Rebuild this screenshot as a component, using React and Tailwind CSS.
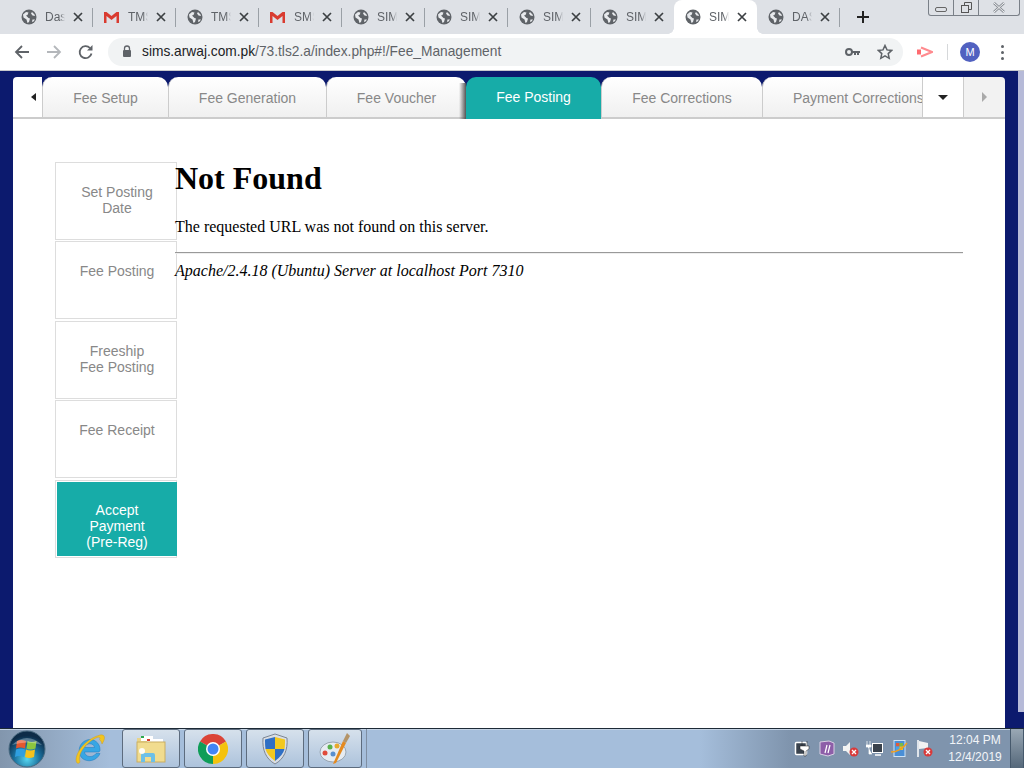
import React from "react";

const chromeTabs = [
  { title: "Das", icon: "globe" },
  { title: "TMS", icon: "gmail" },
  { title: "TMS", icon: "globe" },
  { title: "SMS", icon: "gmail" },
  { title: "SIM", icon: "globe" },
  { title: "SIM", icon: "globe" },
  { title: "SIM", icon: "globe" },
  { title: "SIM", icon: "globe" },
  { title: "SIM", icon: "globe", active: true },
  { title: "DAS", icon: "globe" },
];

const feeTabs = [
  { label: "Fee Setup", width: "w-[126px]" },
  { label: "Fee Generation", width: "w-[158px]" },
  { label: "Fee Voucher", width: "w-[140px]" },
  { label: "Fee Posting", width: "w-[135px]", active: true },
  { label: "Fee Corrections", width: "w-[161px]" },
];

const sideItems = [
  { lines: ["Set Posting", "Date"], gap: "mb-px" },
  { lines: ["Fee Posting"], gap: "mb-[2px]" },
  { lines: ["Freeship", "Fee Posting"], gap: "mb-px" },
  { lines: ["Fee Receipt"], gap: "mb-[2px]" },
];

const Globe = () => (
  <svg width="16" height="16" viewBox="0 0 16 16" className="shrink-0">
    <circle cx="8" cy="8" r="7.500" fill="#5f6368" />
    <path d="M2 5.500L5 3l2.500.500L6.500 6 5 6.500 7.500 9l1.500.500-1 3.500-1.500 1-1-3.500L2.500 8.500z" fill="#e8eaed" />
    <path d="M11 3l2.500 2.500.500 1.500-2.500-.500-1.500-2z" fill="#e8eaed" />
    <path d="M11.500 10.500H14l-1.500 2-1.500.500z" fill="#e8eaed" />
  </svg>
);

const Gmail = () => (
  <svg width="15" height="12" viewBox="0 0 15 12" className="mr-px shrink-0">
    <path d="M2.500 5V1l5 4 5-4v4l-5 4z" fill="#e4e4e4" opacity="0.700" />
    <path d="M0 1h2.500L7.500 5l5-4H15v11h-2.500V5L7.500 9 2.500 5v7H0z" fill="#d93b30" />
  </svg>
);

const CloseX = () => (
  <svg width="10" height="10" viewBox="0 0 10 10" className="shrink-0">
    <path d="M1 1l8 8M9 1l-8 8" stroke="#3c4043" strokeWidth="1.700" />
  </svg>
);

const ChromeTab = ({ tab, showSep }) => (
  <div
    className={`relative flex h-[34px] w-[83px] shrink-0 items-center pl-[11px] ${
      tab.active ? "rounded-t-[8px] bg-white" : ""
    }`}
  >
    {tab.active && (
      <>
        <span className="absolute bottom-0 left-[-6px] h-[6px] w-[6px] bg-[radial-gradient(circle_at_top_left,transparent_5.500px,#ffffff_6px)]" />
        <span className="absolute bottom-0 right-[-6px] h-[6px] w-[6px] bg-[radial-gradient(circle_at_top_right,transparent_5.500px,#ffffff_6px)]" />
      </>
    )}
    {tab.icon === "globe" ? <Globe /> : <Gmail />}
    <span className="ml-[8px] w-[20px] overflow-hidden whitespace-nowrap text-[12px] text-[#5f6368] [mask-image:linear-gradient(to_right,black_75%,transparent)]">
      {tab.title}
    </span>
    <span className="ml-[8px]">
      <CloseX />
    </span>
    {showSep && <span className="absolute right-0 top-[8px] h-[19px] w-px bg-[#9aa0a6]" />}
  </div>
);

const WindowControls = () => (
  <div className="absolute right-[4px] top-0 flex h-[16px] w-[92px] rounded-b-[3px] border border-t-0 border-[#7a8088]">
    <div className="flex w-[25px] items-center justify-center border-r border-[#7a8088]">
      <span className="mt-[3px] h-[5px] w-[12px] rounded-[2px] border border-[#666]" />
    </div>
    <div className="flex w-[25px] items-center justify-center border-r border-[#7a8088]">
      <svg width="13" height="13" viewBox="0 0 13 13">
        <rect x="1.500" y="4.500" width="7" height="7" fill="none" stroke="#555" />
        <path d="M4.500 4V1.500h7v7H9" fill="none" stroke="#555" />
      </svg>
    </div>
    <div className="flex flex-1 items-center justify-center">
      <svg width="12" height="11" viewBox="0 0 12 11">
        <path d="M1 1l10 9M11 1L1 10" stroke="#8a8f96" strokeWidth="2.500" />
        <path d="M1 1l10 9M11 1L1 10" stroke="#f4f5f6" strokeWidth="1" />
      </svg>
    </div>
  </div>
);

const Toolbar = () => (
  <div className="flex h-[37px] items-center border-b border-[#c8c9cc] bg-white">
    <svg width="16" height="16" viewBox="0 0 16 16" className="ml-[14px]">
      <path d="M15 8H2M8 2L2 8l6 6" fill="none" stroke="#5f6368" strokeWidth="1.800" />
    </svg>
    <svg width="16" height="16" viewBox="0 0 16 16" className="ml-[16px]">
      <path d="M1 8h13M8 2l6 6-6 6" fill="none" stroke="#b4b7bb" strokeWidth="1.800" />
    </svg>
    <svg width="16" height="16" viewBox="0 0 16 16" className="ml-[16px]">
      <path d="M13.500 9.500A6 6 0 1 1 12 4" fill="none" stroke="#5f6368" strokeWidth="1.800" />
      <path d="M14.500 1v5.500H9z" fill="#5f6368" />
    </svg>
    <div className="ml-[14px] flex h-[28px] w-[795px] items-center rounded-full bg-[#f1f3f4] pl-[14px]">
      <svg width="10" height="12" viewBox="0 0 10 12" className="mb-[2px]">
        <path d="M2.500 5V3.500a2.500 2.500 0 0 1 5 0V5" fill="none" stroke="#5f6368" strokeWidth="1.300" />
        <rect x="1" y="5" width="8" height="7" rx="1" fill="#5f6368" />
      </svg>
      <span className="ml-[10px] whitespace-nowrap text-[13.750px] text-[#5f6368]">
        <span className="text-[#202124]">sims.arwaj.com.pk</span>/73.tls2.a/index.php#!/Fee_Management
      </span>
      <svg width="16" height="10" viewBox="0 0 16 10" className="ml-auto">
        <circle cx="4" cy="5" r="3" fill="none" stroke="#5f6368" strokeWidth="2" />
        <path d="M7 4h8v2h-1v2h-2V6h-1v2H9V6H7z" fill="#5f6368" />
      </svg>
      <svg width="16" height="16" viewBox="0 0 16 16" className="ml-[16px] mr-[10px]">
        <path
          d="M8 1.500l2 4.400 4.700.500-3.500 3.200 1 4.700L8 11.900l-4.200 2.400 1-4.700L1.300 6.400 6 5.900z"
          fill="none"
          stroke="#5f6368"
          strokeWidth="1.500"
        />
      </svg>
    </div>
    <svg width="16" height="12" viewBox="0 0 16 12" className="ml-[14px]">
      <rect x="0" y="3.500" width="4" height="5" fill="#ff6b70" />
      <path d="M4 1.500L15 6 4 10.500" fill="none" stroke="#ff8a8e" strokeWidth="2" />
    </svg>
    <span className="ml-[14px] h-[16px] w-px bg-[#d6d8da]" />
    <span className="ml-[12px] flex h-[20px] w-[20px] items-center justify-center rounded-full bg-[#5161c0] text-[11px] text-white">
      M
    </span>
    <span className="ml-[21px] flex flex-col gap-[3px]">
      <span className="h-[3px] w-[3px] rounded-full bg-[#5f6368]" />
      <span className="h-[3px] w-[3px] rounded-full bg-[#5f6368]" />
      <span className="h-[3px] w-[3px] rounded-full bg-[#5f6368]" />
    </span>
  </div>
);

const FeeTabBar = () => (
  <div className="flex h-[42px] items-stretch bg-[#0c1a6e]">
    <div className="flex w-[29px] items-center justify-center rounded-tl-[4px] border-b-2 border-[#ccc] bg-white pl-[12px]">
      <span className="h-0 w-0 border-y-[4px] border-r-[5px] border-y-transparent border-r-[#222]" />
    </div>
    {feeTabs.map((tab) =>
      tab.active ? (
        <div
          key={tab.label}
          className={`${tab.width} relative flex items-center justify-center rounded-t-[10px] bg-[#17aca8] pb-[2px] text-white`}
        >
          {/* dark edge the active tab casts on its left neighbour */}
          <span className="absolute bottom-0 left-[-7px] top-[6px] w-[7px] bg-gradient-to-r from-transparent to-[#555]" />
          {tab.label}
        </div>
      ) : (
        <div
          key={tab.label}
          className={`${tab.width} flex items-center justify-center rounded-t-[10px] border-b-2 border-l border-[#ccc] bg-gradient-to-b from-white to-[#f0f0f0] pt-[2px] text-[#888]`}
        >
          {tab.label}
        </div>
      )
    )}
    <div className="flex w-[160px] items-center overflow-hidden whitespace-nowrap rounded-tl-[10px] border-b-2 border-l border-[#ccc] bg-gradient-to-b from-white to-[#f0f0f0] pl-[30px] pt-[2px] text-[#888]">
      Payment Corrections
    </div>
    <div className="flex w-[41px] items-center justify-center border-b-2 border-l border-[#ccc] bg-white">
      <span className="h-0 w-0 border-x-[5px] border-t-[5px] border-x-transparent border-t-[#222]" />
    </div>
    <div className="flex flex-1 items-center justify-center rounded-tr-[4px] border-b-2 border-l border-[#ccc] bg-[#f2f2f2]">
      <span className="h-0 w-0 border-y-[5px] border-l-[5px] border-y-transparent border-l-[#aaa]" />
    </div>
  </div>
);

const SideMenu = () => (
  <div className="flex w-[120px] shrink-0 flex-col">
    {sideItems.map((item) => (
      <div
        key={item.lines.join(" ")}
        className={`${item.gap} h-[78px] w-[122px] border border-[#ddd] bg-white pl-[2px] pt-[21px] text-center text-[14px] leading-[16px] text-[#888]`}
      >
        {item.lines.map((line) => (
          <div key={line}>{line}</div>
        ))}
      </div>
    ))}
    <div className="h-[78px] w-[122px] border border-[#ddd] bg-white pl-[1px] pt-px">
      <div className="h-[74px] w-[120px] bg-[#17aca8] pt-[20px] text-center text-[14px] leading-[16px] text-white">
        <div>Accept</div>
        <div>Payment</div>
        <div>(Pre-Reg)</div>
      </div>
    </div>
  </div>
);

const WindowsOrb = () => (
  <svg width="38" height="38" viewBox="0 0 38 38" className="ml-[8px] shrink-0">
    <defs>
      <radialGradient id="orb" cx="50%" cy="78%" r="65%">
        <stop offset="0%" stopColor="#56d6f0" />
        <stop offset="55%" stopColor="#1a6f9c" />
        <stop offset="100%" stopColor="#0e2c48" />
      </radialGradient>
    </defs>
    <circle cx="19" cy="19" r="18" fill="url(#orb)" stroke="#4a6a80" />
    <path d="M9 11q4-2 9 0l-1 7.500q-5-2-9 0z" fill="#e4572e" />
    <path d="M19.500 11q4 2 9 0l-1 7.500q-5 2-9 0z" fill="#8cc63f" />
    <path d="M8 19.500q4-2 9 0l-1 7.500q-5-2-9 0z" fill="#2f9fe0" />
    <path d="M18 19.500q4 2 9 0l-1 7.500q-5 2-9 0z" fill="#f6c21c" />
    <path d="M4 15q15-14 30 0q-15-5-30 0z" fill="#ffffff" opacity="0.300" />
  </svg>
);

const IeIcon = () => (
  <svg width="32" height="32" viewBox="0 0 32 32">
    <path
      d="M25 19H10.500c.500 5 8 6.500 11.500 1.500h4C23 28 13 30 8 25 3 20 4.500 9.500 13 7c7-2 13 3 13 9.500 0 1 0 1.500-1 2.500zM10.500 14.500h10c-.500-5-9-5-10 0z"
      fill="#38a6e4"
      stroke="#1c78bf"
      strokeWidth="0.500"
    />
    <path
      d="M3 30C-1 25 8 7 26 2c5-1 6 3 2 9-.500-2-1-3-2.500-4.500C27 3.500 24 3.500 20 6 11 11 3 22 6 29c-1 1.500-2 1.500-3 1z"
      fill="#f2c51f"
      stroke="#c9961a"
      strokeWidth="0.400"
    />
  </svg>
);

const FolderIcon = () => (
  <svg width="32" height="32" viewBox="0 0 32 32">
    <path d="M2 5h10l2 2h10v4H2z" fill="#e8d48a" />
    <rect x="6" y="3" width="12" height="5" fill="#fff" />
    <rect x="6" y="3" width="3" height="2" fill="#2fa84f" />
    <rect x="12" y="6" width="12" height="4" fill="#fff" />
    <rect x="12" y="6" width="3" height="2" fill="#d9402e" />
    <rect x="20" y="6" width="8" height="4" fill="#fff" />
    <rect x="2" y="9" width="28" height="20" fill="#f1dc8f" stroke="#c9ae62" />
    <path d="M6 29v-7a2 2 0 0 1 2-2h10a2 2 0 0 1 2 2v7h-4v-5H10v5z" fill="#6cc0e8" />
    <circle cx="7" cy="18" r="3" fill="#fff" opacity="0.900" />
  </svg>
);

const ChromeIcon = () => (
  <svg width="30" height="30" viewBox="0 0 30 30">
    <path d="M15 15L2 7.500A15 15 0 0 1 28 7.500z" fill="#db4437" />
    <path d="M15 15L2 7.500A15 15 0 0 0 15 30z" fill="#0f9d58" />
    <path d="M15 15l13-7.500A15 15 0 0 1 15 30z" fill="#f4c20d" />
    <circle cx="15" cy="15" r="7" fill="#fff" />
    <circle cx="15" cy="15" r="5.500" fill="#4285f4" />
  </svg>
);

const ShieldIcon = () => (
  <svg width="28" height="32" viewBox="0 0 28 32">
    <path d="M14 1l12 4c1 12-3 21-12 26C5 26 1 17 2 5z" fill="#d9dde3" stroke="#7d8794" />
    <path d="M14 4v12H4.500C4 12 4 9 4 6.500z" fill="#2f6fc4" />
    <path d="M14 4l10 2.500c0 3 0 6-.500 9.500H14z" fill="#f2c81e" />
    <path d="M14 16H4.500c1 4 4 8 9.500 12z" fill="#f2c81e" />
    <path d="M14 16h9.500c-1 4-4 8-9.500 12z" fill="#2f6fc4" />
  </svg>
);

const PaintIcon = () => (
  <svg width="32" height="32" viewBox="0 0 32 32">
    <ellipse cx="14" cy="19" rx="13" ry="10" fill="#e6ecf2" stroke="#9aa6b2" />
    <circle cx="6" cy="20" r="2.500" fill="#e04a3a" />
    <circle cx="11" cy="14" r="2.500" fill="#58b14c" />
    <circle cx="18" cy="13" r="2.500" fill="#e7a92c" />
    <circle cx="14" cy="21" r="2.500" fill="#5a8fcf" />
    <path d="M14 31l3-1L27 10l-3-2z" fill="#e58a1f" />
    <path d="M24 8l3 2 4-7-3-3z" fill="#b49468" />
  </svg>
);

const TaskButton = ({ width, children }) => (
  <div className={`${width} flex h-[39px] shrink-0 items-center justify-center rounded-[3px] border border-[#5d6c7e] bg-gradient-to-b from-[#d6e1ec] to-[#adc3dc]`}>
    {children}
  </div>
);

const TrayCell = ({ children }) => (
  <div className="flex w-[24.400px] shrink-0 items-center justify-center">{children}</div>
);

const TrayIcons = () => (
  <div className="flex items-center">
    <TrayCell>
      <svg width="17" height="17" viewBox="0 0 17 17">
        <rect x="1.500" y="2.500" width="11" height="12" rx="1" fill="#39424d" stroke="#fff" strokeWidth="1.500" />
        <path d="M8 1v5M13 1v5M6 6h9v3l-3 2v5h-2v-5L6 9z" fill="#fff" stroke="#222" strokeWidth="0.500" />
      </svg>
    </TrayCell>
    <TrayCell>
      <svg width="16" height="17" viewBox="0 0 16 17">
        <path d="M1 2l9-1 5 2v11l-6 2-8-2z" fill="#8d5ea8" stroke="#d9cfe3" />
        <path d="M6 13l2-8M9 13l2-8" stroke="#fff" strokeWidth="1.200" />
      </svg>
    </TrayCell>
    <TrayCell>
      <svg width="17" height="17" viewBox="0 0 17 17">
        <path d="M1 6h3l4-4v13l-4-4H1z" fill="#f2f2f2" />
        <circle cx="12" cy="12" r="4.500" fill="#d93a3a" />
        <path d="M10 10l4 4M14 10l-4 4" stroke="#fff" strokeWidth="1.300" />
      </svg>
    </TrayCell>
    <TrayCell>
      <svg width="18" height="17" viewBox="0 0 18 17">
        <path d="M1 1v4M4 1v4M0 5h5v2H0zM2 7h1v7h3" fill="#fff" stroke="#fff" strokeWidth="0.700" />
        <rect x="6.500" y="3.500" width="10" height="9" fill="#39424d" stroke="#fff" />
        <path d="M9 15h6" stroke="#fff" strokeWidth="1.500" />
      </svg>
    </TrayCell>
    <TrayCell>
      <svg width="17" height="17" viewBox="0 0 17 17">
        <rect x="3" y="0.500" width="11" height="16" fill="#4a8fd6" stroke="#cfe3f5" />
        <rect x="5" y="3" width="3.500" height="3.500" fill="#e35a3a" />
        <rect x="8.500" y="3" width="3.500" height="3.500" fill="#7cbb44" />
        <rect x="5" y="6.500" width="3.500" height="3.500" fill="#4ba3e3" />
        <rect x="8.500" y="6.500" width="3.500" height="3.500" fill="#f3c11e" />
        <path d="M0 12q9 0 16-9" fill="none" stroke="#f0a020" strokeWidth="1.500" />
      </svg>
    </TrayCell>
    <TrayCell>
      <svg width="17" height="17" viewBox="0 0 17 17">
        <path d="M2 0v17" stroke="#fff" strokeWidth="1.500" />
        <path d="M3 1l9 2v5L3 9z" fill="#f2f2f2" />
        <circle cx="12" cy="12" r="4.500" fill="#d93a3a" />
        <path d="M10 10l4 4M14 10l-4 4" stroke="#fff" strokeWidth="1.300" />
      </svg>
    </TrayCell>
  </div>
);

const Taskbar = () => (
  <div className="flex h-[40px] items-center border-t border-[#1d2a36] bg-[linear-gradient(to_right,#8296ad_0,#a5bedb_110px,#a5bedb_700px,#7f94ad_790px)] shadow-[inset_0_1px_0_#c4d3e4]">
    <WindowsOrb />
    <div className="ml-[28px] w-[32px]">
      <IeIcon />
    </div>
    <div className="ml-[16px] flex gap-[4px]">
      <TaskButton width="w-[58px]">
        <FolderIcon />
      </TaskButton>
      <TaskButton width="w-[58px]">
        <ChromeIcon />
      </TaskButton>
      <TaskButton width="w-[58px]">
        <ShieldIcon />
      </TaskButton>
      <TaskButton width="w-[54px]">
        <PaintIcon />
      </TaskButton>
    </div>
    <div className="ml-[4px] h-[39px] w-[1px] bg-[#7f8fa3]" />
    <div className="ml-auto flex h-full w-[234px] items-center">
      <TrayIcons />
      <div className="ml-[12px] text-center text-[12px] leading-[17px] text-[#f2f5f8]">
        <div>12:04 PM</div>
        <div>12/4/2019</div>
      </div>
      <div className="ml-auto h-full w-[14px] border-x border-[#46596c] bg-gradient-to-b from-[#9aa8b5] to-[#55687a]" />
    </div>
  </div>
);

export default function App() {
  return (
    <div className="flex h-[768px] w-[1024px] flex-col overflow-hidden font-['Liberation_Sans',sans-serif] text-[14px]">
      <div className="relative flex h-[34px] bg-[#dee1e6] pl-[10px]">
        {chromeTabs.map((tab, i) => (
          <ChromeTab key={i} tab={tab} showSep={!tab.active && chromeTabs[i + 1]?.active !== true} />
        ))}
        <svg width="14" height="14" viewBox="0 0 14 14" className="ml-[16px] mt-[10px]">
          <path d="M7 1v12M1 7h12" stroke="#222" strokeWidth="2" />
        </svg>
        <WindowControls />
      </div>
      <Toolbar />
      <div className="relative flex flex-1 flex-col bg-[#0c1a6e] pl-[13px] pr-[19px] pt-[6px]">
        <span className="absolute right-0 top-0 h-[641px] w-[6px] bg-[#b6bad8]" />
        <div className="flex flex-1 flex-col bg-white">
          <FeeTabBar />
          <div className="flex flex-1 pl-[42px] pt-[43px]">
            <SideMenu />
            <div className="relative -mt-[2px] mr-[42px] flex-1 font-['Liberation_Serif',serif] text-[16px] text-black">
              <h1 className="mb-[22px] text-[32px] font-bold leading-[36px]">Not Found</h1>
              <p className="mb-[16px] leading-[18px]">The requested URL was not found on this server.</p>
              <hr className="mb-[8px] border-t border-b border-t-[#999] border-b-[#eee]" />
              <address className="italic leading-[18px]">Apache/2.4.18 (Ubuntu) Server at localhost Port 7310</address>
            </div>
          </div>
        </div>
      </div>
      <Taskbar />
    </div>
  );
}
